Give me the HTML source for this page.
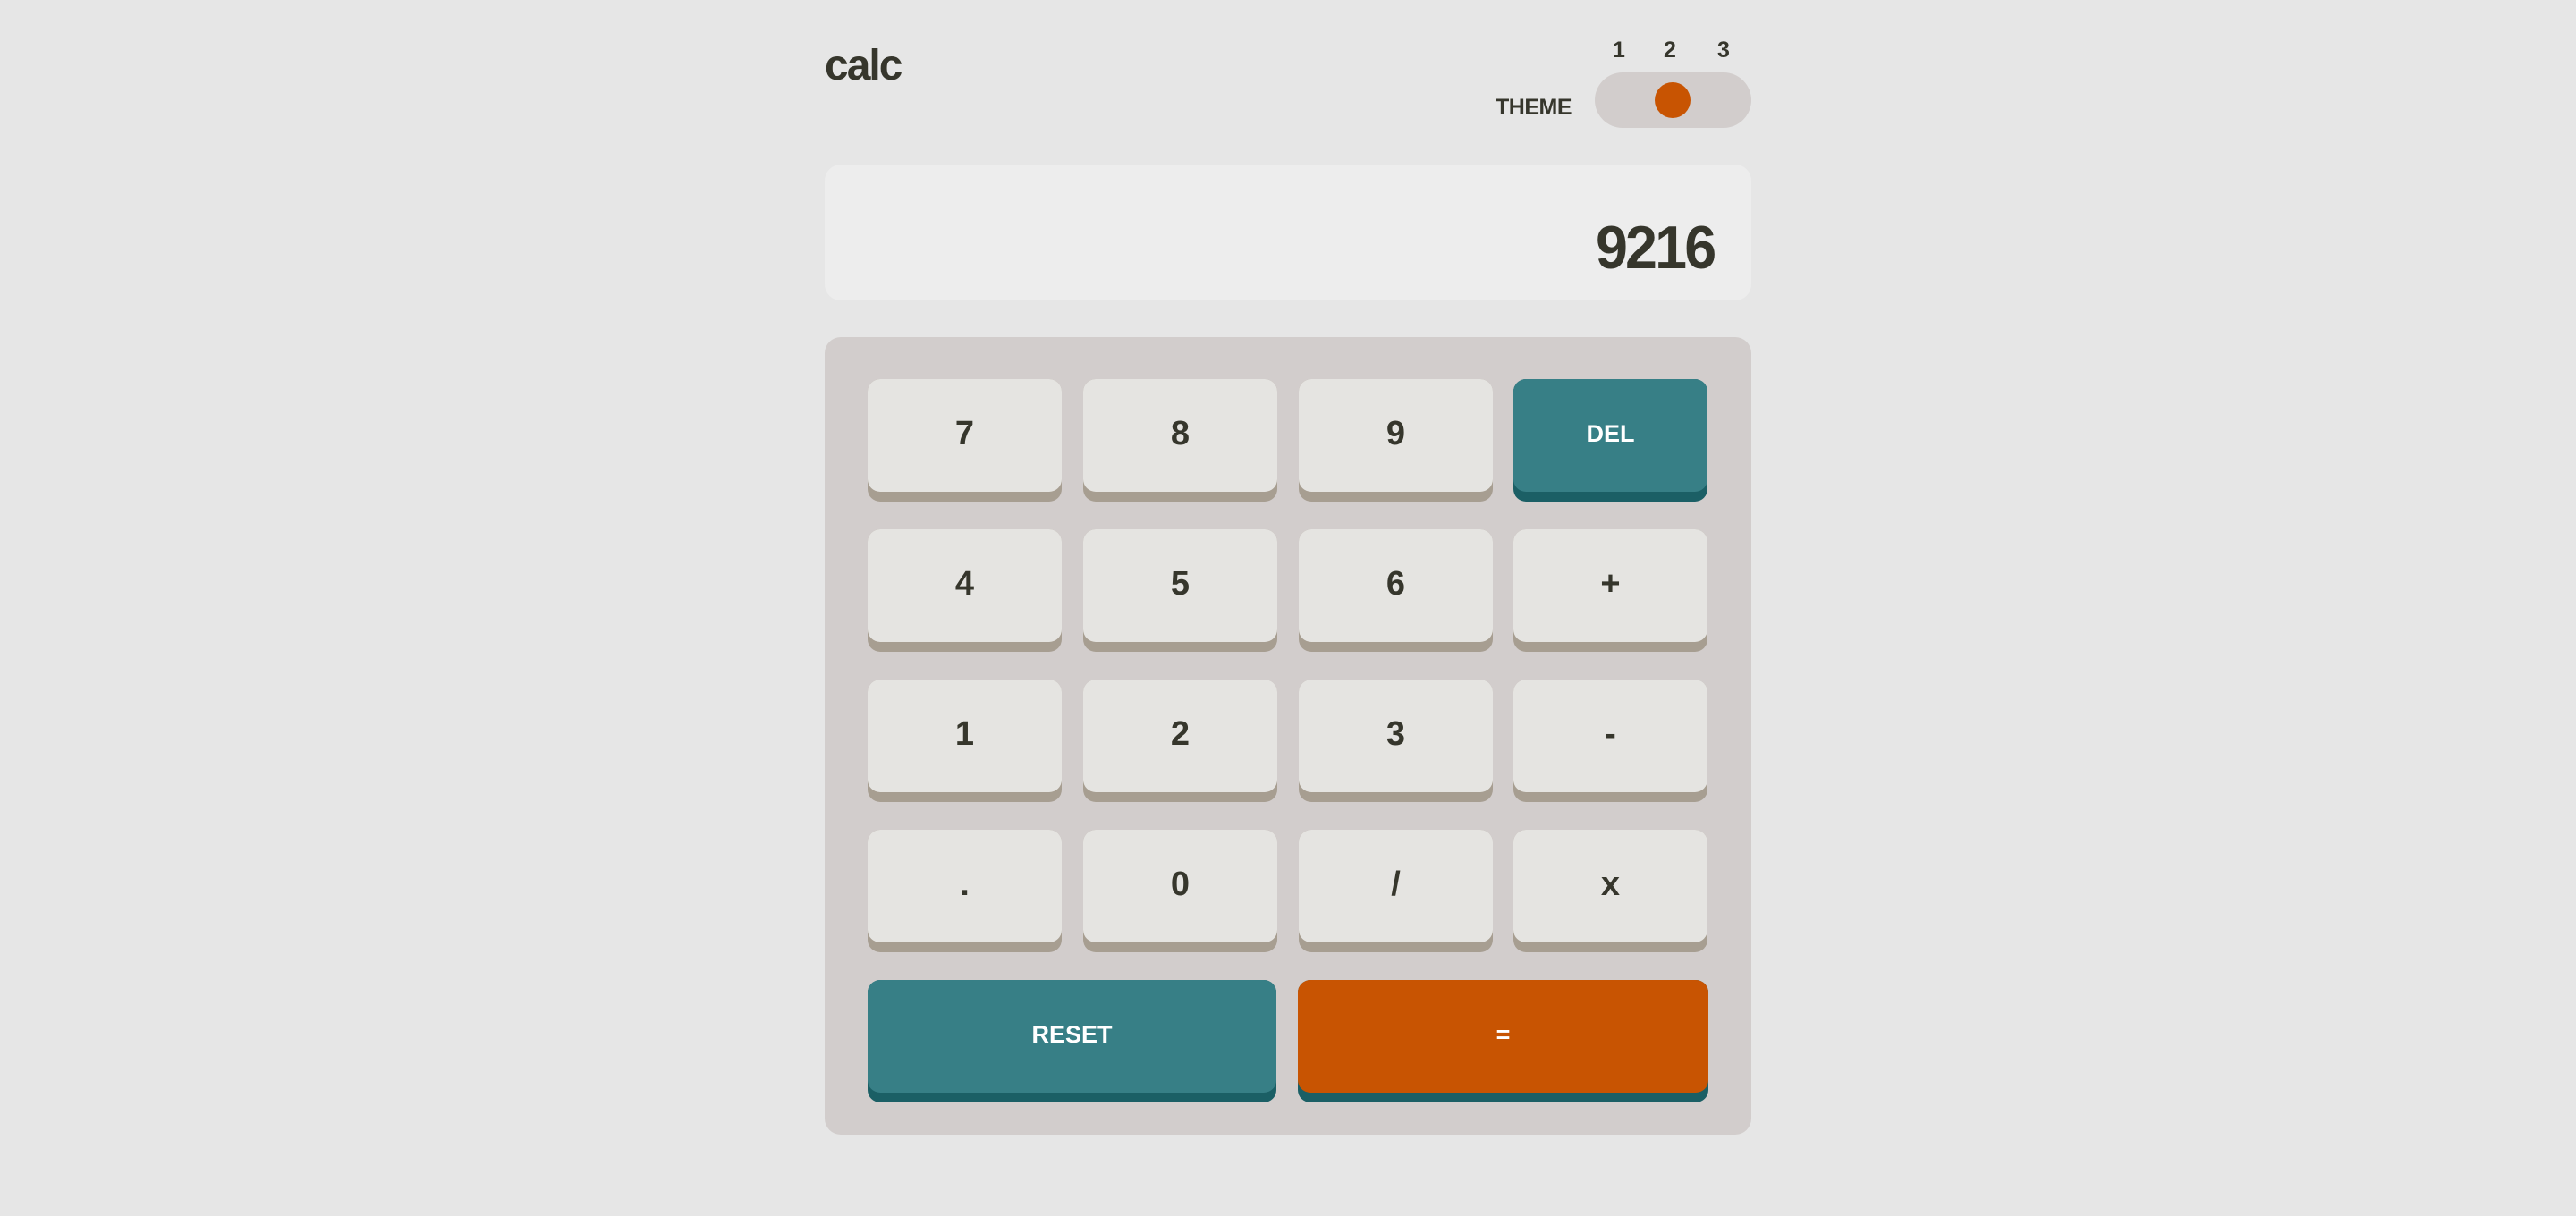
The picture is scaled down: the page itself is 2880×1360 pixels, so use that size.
<!DOCTYPE html>
<html><head><meta charset="utf-8"><style>
*{margin:0;padding:0;box-sizing:border-box}
body{width:2880px;height:1360px;background:#e6e6e6;font-family:"Liberation Sans",sans-serif;font-weight:bold;color:#36362c;position:relative;overflow:hidden}
.a{position:absolute}
.calc{left:922px;top:46px;font-size:48px;letter-spacing:-2px}
.num{top:42px;font-size:25px}
.theme{left:1672px;top:106px;font-size:25px;letter-spacing:-0.5px}
.tog{left:1783px;top:81px;width:175px;height:62px;border-radius:31px;background:#d2cdcc}
.knob{left:1850px;top:92px;width:40px;height:40px;border-radius:50%;background:#c85402}
.disp{left:922px;top:184px;width:1036px;height:152px;border-radius:18px;background:#ededed}
.val{right:964px;top:238px;font-size:68px;letter-spacing:-3px;transform:scaleX(0.95);transform-origin:right}
.pad{left:922px;top:377px;width:1036px;height:892px;border-radius:18px;background:#d2cdcc}
.k{position:absolute;width:217px;height:137px;border-radius:14px;background:#a79e91}
.k span{position:absolute;left:0;top:0;right:0;height:126px;border-radius:14px;background:#e5e4e1;display:flex;align-items:center;justify-content:center;font-size:38px;padding-bottom:4px}
.t{background:#1b5f65}.t span{background:#377f86;color:#fff;font-size:27px}
.o{background:#1b5f65}.o span{background:#c85402;color:#fff;font-size:27px}
.w{width:457px}.w2{width:459px}
</style></head><body>
<div class="a calc">calc</div>
<div class="a num" style="left:1803px">1</div>
<div class="a num" style="left:1860px">2</div>
<div class="a num" style="left:1920px">3</div>
<div class="a theme">THEME</div>
<div class="a tog"></div><div class="a knob"></div>
<div class="a disp"></div><div class="a val">9216</div>
<div class="a pad"></div>
<div class="k" style="left:970px;top:424px"><span>7</span></div>
<div class="k" style="left:1211px;top:424px"><span>8</span></div>
<div class="k" style="left:1452px;top:424px"><span>9</span></div>
<div class="k t" style="left:1692px;top:424px"><span>DEL</span></div>
<div class="k" style="left:970px;top:592px"><span>4</span></div>
<div class="k" style="left:1211px;top:592px"><span>5</span></div>
<div class="k" style="left:1452px;top:592px"><span>6</span></div>
<div class="k" style="left:1692px;top:592px"><span>+</span></div>
<div class="k" style="left:970px;top:760px"><span>1</span></div>
<div class="k" style="left:1211px;top:760px"><span>2</span></div>
<div class="k" style="left:1452px;top:760px"><span>3</span></div>
<div class="k" style="left:1692px;top:760px"><span>-</span></div>
<div class="k" style="left:970px;top:928px"><span>.</span></div>
<div class="k" style="left:1211px;top:928px"><span>0</span></div>
<div class="k" style="left:1452px;top:928px"><span>/</span></div>
<div class="k" style="left:1692px;top:928px"><span>x</span></div>
<div class="k t w" style="left:970px;top:1096px"><span>RESET</span></div>
<div class="k o w2" style="left:1451px;top:1096px"><span>=</span></div>
</body></html>
